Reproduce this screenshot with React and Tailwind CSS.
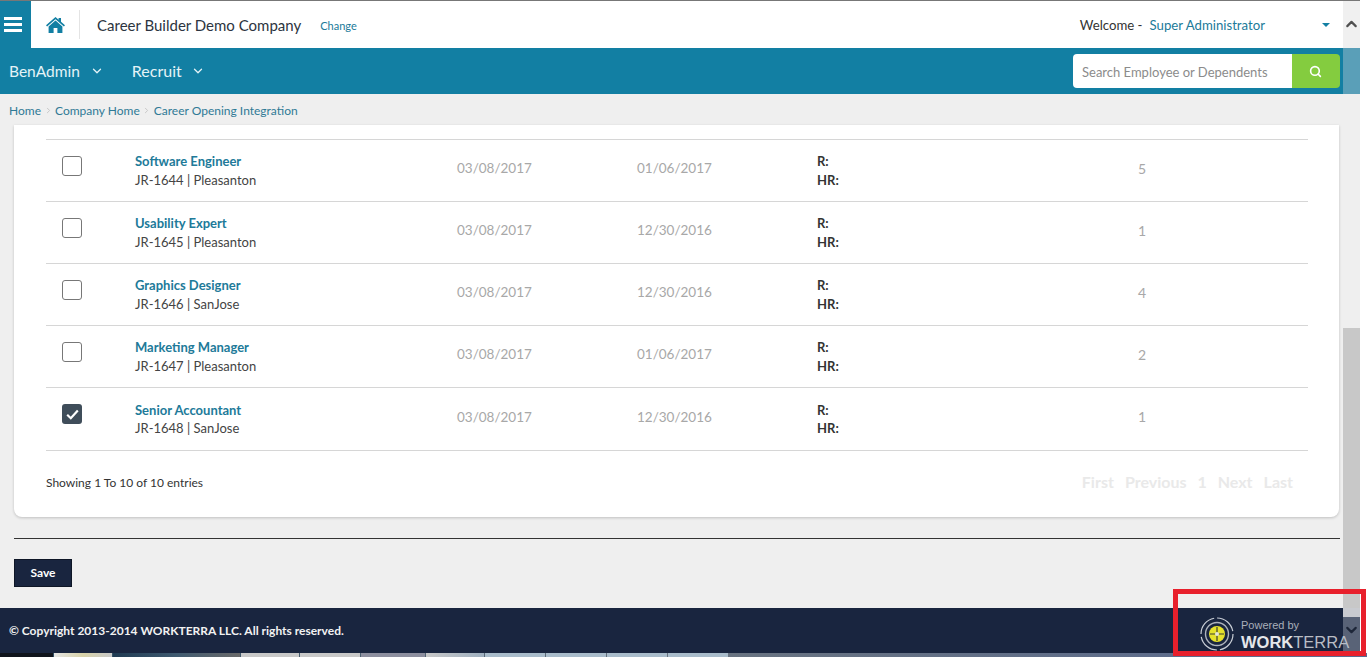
import React from "react";
import { ChevronDown, ChevronRight, ChevronUp, Search } from "lucide-react";

const rows = [
  { title: "Software Engineer", sub: "JR-1644 | Pleasanton", posted: "03/08/2017", closes: "01/06/2017", count: 5 },
  { title: "Usability Expert", sub: "JR-1645 | Pleasanton", posted: "03/08/2017", closes: "12/30/2016", count: 1 },
  { title: "Graphics Designer", sub: "JR-1646 | SanJose", posted: "03/08/2017", closes: "12/30/2016", count: 4 },
  { title: "Marketing Manager", sub: "JR-1647 | Pleasanton", posted: "03/08/2017", closes: "01/06/2017", count: 2 },
  { title: "Senior Accountant", sub: "JR-1648 | SanJose", posted: "03/08/2017", closes: "12/30/2016", count: 1, checked: true },
];

const taskbar = [
  ["w-[53px]", "bg-[#10141c]"],
  ["w-[58px]", "bg-gradient-to-r from-[#e4e4e4] via-[#d8d2a8] to-[#c8c8c8]"],
  ["w-[127px]", "bg-gradient-to-r from-[#1f3a52] via-[#3f5a70] to-[#6a6a6a]"],
  ["w-[58px]", "bg-[#c8c8c8]"],
  ["w-[60px]", "bg-[#c8c8c8]"],
  ["w-[64px]", "bg-[#8d8f9f]"],
  ["w-[58px]", "bg-gradient-to-r from-[#c8c8c8] to-[#9fb0c0]"],
  ["w-[60px]", "bg-[#a9bccb]"],
  ["w-[60px]", "bg-[#a9bccb]"],
  ["w-[60px]", "bg-[#a9bccb]"],
  ["w-[60px]", "bg-[#a9bccb]"],
];

const HomeIcon = () => (
  <svg width="19" height="16" viewBox="0 0 19 16" className="fill-[#127fa3]">
    <path d="M9.5 0 L12.6 2.7 V1 H15 V4.8 L19 8.3 L17.9 9.5 L9.5 2.3 L1.1 9.5 L0 8.3 Z" />
    <path d="M9.5 3.6 L16.4 9.5 V16 H11.4 V11 H7.6 V16 H2.6 V9.5 Z" />
  </svg>
);

const Logo = () => (
  <svg width="36" height="36" viewBox="0 0 36 36">
    <circle cx="18" cy="18" r="16" fill="none" stroke="#c9ced6" strokeWidth="1.2" strokeDasharray="22 3" />
    <circle cx="18" cy="18" r="11.5" fill="none" stroke="#aeb4bd" strokeWidth="1.4" />
    <circle cx="18" cy="18" r="8" fill="#e6e22c" />
    <path d="M18 11v14M11 18h14" stroke="#3d4030" strokeWidth="1.2" />
    <circle cx="18" cy="18" r="2" fill="#e8e8d8" />
  </svg>
);

const JobRow = ({ job }) => (
  <div className="flex h-[62px] last:h-[63px] items-center border-b border-[#d6d6d6]">
    <div className="w-[89px] pl-4 shrink-0 -translate-y-[5px]">
      {job.checked ? (
        <div className="w-5 h-5 rounded-[3px] bg-[#3f4d5a] flex items-center justify-center">
          <svg width="13" height="11" viewBox="0 0 13 11">
            <path d="M1.2 5.8 L4.8 9.2 L11.8 1.5" fill="none" stroke="#fff" strokeWidth="2.2" />
          </svg>
        </div>
      ) : (
        <div className="w-5 h-5 rounded-[3px] border border-[#777] bg-white" />
      )}
    </div>
    <div className="w-[322px] shrink-0 leading-[18.5px]">
      <div className="text-[13px] font-bold text-[#217a99]">{job.title}</div>
      <div className="text-[13px] text-[#444]">{job.sub}</div>
    </div>
    <div className="w-[180px] shrink-0 text-[13.5px] text-[#a8a8a8] -translate-y-[2px]">{job.posted}</div>
    <div className="w-[180px] shrink-0 text-[13.5px] text-[#a8a8a8] -translate-y-[2px]">{job.closes}</div>
    <div className="w-[321px] shrink-0 text-[13px] font-bold text-[#333] leading-[18.5px]">
      <div>R:</div>
      <div>HR:</div>
    </div>
    <div className="text-sm text-[#a8a8a8] -translate-y-[2px]">{job.count}</div>
  </div>
);

export default function App() {
  return (
    <div className="relative h-[657px] w-[1367px] overflow-hidden bg-white font-['Lato','Open_Sans',sans-serif]">
      <div className="flex h-[653px]">
        <div className="w-[1343px] flex flex-col">
          <header className="h-12 bg-white border-t border-[#777] flex items-center shrink-0">
            <div className="w-[31px] h-full bg-[#127fa3] flex flex-col justify-center gap-[3px] pl-1 pr-[9px]">
              <span className="h-[3px] bg-white" />
              <span className="h-[3px] bg-white" />
              <span className="h-[3px] bg-white" />
            </div>
            <div className="w-[49px] h-[29px] flex items-center justify-center border-r border-[#e4e4e4]">
              <HomeIcon />
            </div>
            <div className="ml-[17px] mt-0.5 text-[15px] text-[#2c3440]">Career Builder Demo Company</div>
            <a className="ml-[19px] text-[11px] text-[#217a99] mt-1">Change</a>
            <div className="ml-auto mt-0.5 flex items-center text-[13.2px]">
              <span className="text-[#333]">Welcome -</span>
              <span className="ml-[7px] text-[#217a99]">Super Administrator</span>
              <span className="ml-[57px] mr-[13px] border-x-4 border-t-4 border-x-transparent border-t-[#127fa3]" />
            </div>
          </header>

          <nav className="h-[46px] bg-[#127fa3] flex items-center shrink-0 pl-[9px] text-[#e4f3f7]">
            <span className="text-[15.5px] mt-px">BenAdmin</span>
            <ChevronDown size={14} strokeWidth={2.2} className="ml-[10px]" />
            <span className="text-[16px] ml-[28px]">Recruit</span>
            <ChevronDown size={14} strokeWidth={2.2} className="ml-[9px]" />
            <div className="ml-auto mr-[3px] flex h-[34px] w-[267px] rounded-[4px] overflow-hidden">
              <div className="w-[219px] bg-white flex items-center pl-[9px] pt-[3px] text-[13px] text-[#8b8b8b]">
                Search Employee or Dependents
              </div>
              <div className="flex-1 bg-[#84cc3f] flex items-center justify-center">
                <Search size={13} strokeWidth={3} className="text-white -translate-x-px" />
              </div>
            </div>
          </nav>

          <div className="h-[31px] bg-[#efefef] flex items-center pl-[9px] pt-0.5 text-xs text-[#2f7a96] shrink-0">
            <span>Home</span>
            <ChevronRight size={9} className="mx-[2.5px] text-[#bbb]" />
            <span>Company Home</span>
            <ChevronRight size={9} className="mx-[2.5px] text-[#bbb]" />
            <span>Career Opening Integration</span>
          </div>

          <main className="flex-1 bg-[#efefef] pl-[14px] pr-[3px]">
            <section className="w-[1325px] h-[392px] bg-white rounded-b-lg shadow-[0_1px_3px_rgba(0,0,0,0.2)] pt-[14px] pl-8 pr-[31px]">
              <div className="border-t border-[#d6d6d6]">
                {rows.map((job) => (
                  <JobRow key={job.sub} job={job} />
                ))}
              </div>
              <div className="flex items-center justify-between h-[64px]">
                <span className="text-xs text-[#333]">Showing 1 To 10 of 10 entries</span>
                <div className="flex gap-[11px] pr-[15px] -mt-0.5 text-[16px] font-bold text-[#e9e9e9]">
                  <span>First</span>
                  <span>Previous</span>
                  <span>1</span>
                  <span>Next</span>
                  <span>Last</span>
                </div>
              </div>
            </section>
            <div className="mt-[21px] border-t border-[#333]" />
            <button className="mt-[20px] block w-[58px] h-[28px] bg-[#19253f] border border-[#0e1626] text-xs font-bold text-white">
              Save
            </button>
          </main>

          <footer className="h-[45px] bg-[#19253f] flex items-center pl-[9px] shrink-0 text-xs font-bold text-[#f2f2f2]">
            © Copyright 2013-2014 WORKTERRA LLC. All rights reserved.
          </footer>
        </div>

        <div className="w-[17px] flex flex-col items-center shrink-0">
          <div className="h-12 w-full bg-[#f0f0f0] border-t border-[#777] flex justify-center pt-[14px]">
            <ChevronUp size={18} strokeWidth={3} className="text-[#505050]" />
          </div>
          <div className="h-[46px] w-full bg-[#5a9fb8]" />
          <div className="h-[234px] w-full bg-[#efefef]" />
          <div className="h-[280px] w-full bg-[#c8c8c8]" />
          <div className="h-[9px] w-full bg-[#c9cbd0]" />
          <div className="flex-1 w-full bg-[#596377] flex justify-center pt-[4px]">
            <ChevronDown size={18} strokeWidth={3} className="text-[#1d2638]" />
          </div>
        </div>
      </div>

      <div className="flex h-1 bg-gradient-to-r from-[#2a4a60] via-[#6a7480] to-[#5a6a90]">
        {taskbar.map(([width, color], i) => (
          <div key={i} className={`${width} ${color} mr-px`} />
        ))}
      </div>

      {/* annotation box and logo sit over the footer */}
      <div className="absolute left-[1173px] top-[589px] w-[193px] h-[67px] border-[5px] border-[#e8202c]" />
      <div className="absolute left-[1199px] top-[616px] flex items-center gap-1.5">
        <Logo />
        <div className="font-['Liberation_Sans',sans-serif] leading-none">
          <div className="mt-[2px] text-[11px] text-[#a9afb9]">Powered by</div>
          <div className="mt-[3px] text-[16.5px] text-[#b8bdc5]">
            <span className="font-bold text-[#e4e6ea]">WORK</span>TERRA
          </div>
        </div>
      </div>
    </div>
  );
}
